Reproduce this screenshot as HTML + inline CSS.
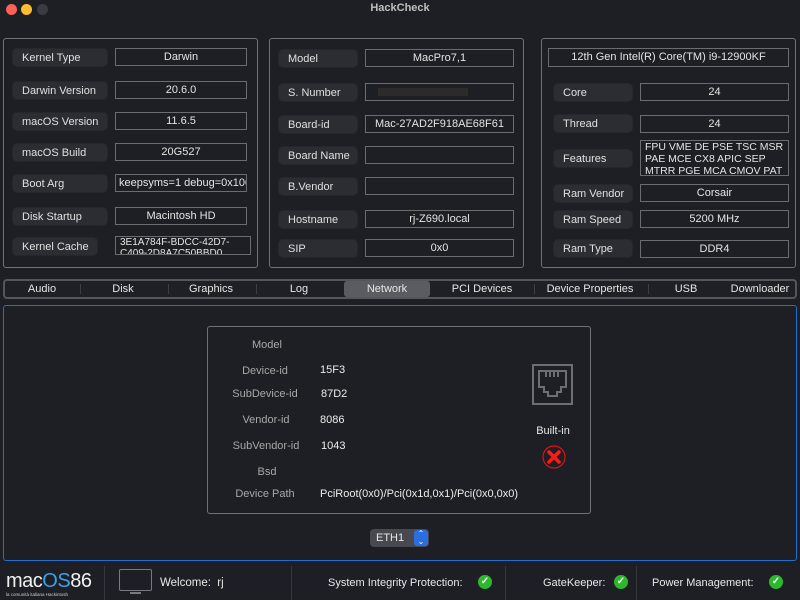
<!DOCTYPE html>
<html><head><meta charset="utf-8"><style>
*{margin:0;padding:0;box-sizing:border-box}
body{width:800px;height:600px;background:#1e1f25;font-family:"Liberation Sans",sans-serif;color:#dcdcdc;position:relative;overflow:hidden;font-size:11px}
.a{position:absolute}
.panel{position:absolute;border:1px solid #707177;border-radius:3px}
.lb{position:absolute;background:#2b2d33;border-radius:4px;padding-left:9px;height:17px;line-height:18px;font-size:11px;color:#e0e0e0;box-shadow:0 0 0 1px #26272c}
.vb{position:absolute;border:1px solid #6b6c70;text-align:center;height:18px;line-height:16px;font-size:11px;color:#e4e4e4;white-space:nowrap;overflow:hidden}
.tab{position:absolute;top:281px;height:16px;line-height:16px;text-align:center;font-size:11px;color:#e6e6e6}
.sep{position:absolute;top:284px;height:10px;width:1px;background:#3d3e44}
.nl{position:absolute;width:120px;text-align:center;color:#a8a8a8;font-size:11px}
.nv{position:absolute;color:#ececec;font-size:11px}
.chk{position:absolute;width:14px;height:14px;border-radius:50%;background:#2bb82d;color:#fff;font-size:10px;line-height:14px;text-align:center;font-weight:bold}
.fs{position:absolute;top:566px;width:1px;height:34px;background:#35363b}
</style></head><body>
<div class="a" style="left:6px;top:4px;width:11px;height:11px;border-radius:50%;background:#fe5f57"></div>
<div class="a" style="left:21px;top:4px;width:11px;height:11px;border-radius:50%;background:#febc2e"></div>
<div class="a" style="left:37px;top:4px;width:11px;height:11px;border-radius:50%;background:#3b3c42"></div>
<div class="a" style="left:0;top:2px;width:800px;text-align:center;font-weight:bold;font-size:11px;color:#bfbfbf">HackCheck</div>

<div class="panel" style="left:3px;top:38px;width:255px;height:230px"></div>
<div class="lb" style="left:13px;top:49px;width:94px">Kernel Type</div><div class="vb" style="left:115px;top:48px;width:132px">Darwin</div>
<div class="lb" style="left:13px;top:82px;width:94px">Darwin Version</div><div class="vb" style="left:115px;top:81px;width:132px">20.6.0</div>
<div class="lb" style="left:13px;top:113px;width:94px">macOS Version</div><div class="vb" style="left:115px;top:112px;width:132px">11.6.5</div>
<div class="lb" style="left:13px;top:144px;width:94px">macOS Build</div><div class="vb" style="left:115px;top:143px;width:132px">20G527</div>
<div class="lb" style="left:13px;top:175px;width:94px">Boot Arg</div><div class="vb" style="left:115px;top:174px;width:132px;text-align:left;padding-left:3px">keepsyms=1 debug=0x100</div>
<div class="lb" style="left:13px;top:208px;width:94px">Disk Startup</div><div class="vb" style="left:115px;top:207px;width:132px">Macintosh HD</div>
<div class="lb" style="left:13px;top:238px;width:84px">Kernel Cache</div><div class="vb" style="left:115px;top:236px;width:136px;height:19px;text-align:left;padding-left:4px;line-height:11px;font-size:10px;white-space:normal">3E1A784F-BDCC-42D7-C409-2D8A7C50BBD0</div>

<div class="panel" style="left:269px;top:38px;width:255px;height:230px"></div>
<div class="lb" style="left:279px;top:50px;width:78px">Model</div><div class="vb" style="left:365px;top:49px;width:149px">MacPro7,1</div>
<div class="lb" style="left:279px;top:84px;width:78px">S. Number</div><div class="vb" style="left:365px;top:83px;width:149px"><div style="margin:4px 0 0 12px;width:90px;height:8px;background:#2c2b2a"></div></div>
<div class="lb" style="left:279px;top:116px;width:78px">Board-id</div><div class="vb" style="left:365px;top:115px;width:149px">Mac-27AD2F918AE68F61</div>
<div class="lb" style="left:279px;top:147px;width:78px">Board Name</div><div class="vb" style="left:365px;top:146px;width:149px"></div>
<div class="lb" style="left:279px;top:178px;width:78px">B.Vendor</div><div class="vb" style="left:365px;top:177px;width:149px"></div>
<div class="lb" style="left:279px;top:211px;width:78px">Hostname</div><div class="vb" style="left:365px;top:210px;width:149px">rj-Z690.local</div>
<div class="lb" style="left:279px;top:240px;width:78px">SIP</div><div class="vb" style="left:365px;top:239px;width:149px">0x0</div>

<div class="panel" style="left:541px;top:38px;width:255px;height:230px"></div>
<div class="vb" style="left:548px;top:48px;width:241px;height:19px;line-height:17px">12th Gen Intel(R) Core(TM) i9-12900KF</div>
<div class="lb" style="left:554px;top:84px;width:78px">Core</div><div class="vb" style="left:640px;top:83px;width:149px">24</div>
<div class="lb" style="left:554px;top:115px;width:78px">Thread</div><div class="vb" style="left:640px;top:115px;width:149px">24</div>
<div class="lb" style="left:554px;top:150px;width:78px">Features</div><div class="vb" style="left:640px;top:140px;width:149px;height:36px;text-align:left;padding-left:4px;line-height:12px;white-space:normal;font-size:10.5px">FPU VME DE PSE TSC MSR PAE MCE CX8 APIC SEP MTRR PGE MCA CMOV PAT</div>
<div class="lb" style="left:554px;top:185px;width:78px">Ram Vendor</div><div class="vb" style="left:640px;top:184px;width:149px">Corsair</div>
<div class="lb" style="left:554px;top:211px;width:78px">Ram Speed</div><div class="vb" style="left:640px;top:210px;width:149px">5200 MHz</div>
<div class="lb" style="left:554px;top:240px;width:78px">Ram Type</div><div class="vb" style="left:640px;top:240px;width:149px">DDR4</div>

<div class="a" style="left:3px;top:279px;width:794px;height:20px;border:2px solid #55565b;border-radius:4px;background:#1f2025"></div>
<div class="a" style="left:344px;top:281px;width:86px;height:16px;background:#5b5c61;border-radius:3px"></div>
<div class="tab" style="left:6px;width:72px">Audio</div>
<div class="sep" style="left:80px"></div>
<div class="tab" style="left:80px;width:86px">Disk</div>
<div class="sep" style="left:168px"></div>
<div class="tab" style="left:168px;width:86px">Graphics</div>
<div class="sep" style="left:256px"></div>
<div class="tab" style="left:256px;width:86px">Log</div>
<div class="tab" style="left:344px;width:86px">Network</div>
<div class="tab" style="left:432px;width:100px">PCI Devices</div>
<div class="sep" style="left:534px"></div>
<div class="tab" style="left:534px;width:112px">Device Properties</div>
<div class="sep" style="left:648px"></div>
<div class="tab" style="left:648px;width:76px">USB</div>
<div class="tab" style="left:724px;width:72px">Downloader</div>

<div class="a" style="left:3px;top:305px;width:794px;height:256px;border:1px solid #1f6ed0;border-radius:3px"></div>
<div class="a" style="left:207px;top:326px;width:384px;height:188px;border:1px solid #707177;border-radius:3px"></div>
<div class="nl" style="left:207px;top:339px">Model</div>
<div class="nl" style="left:205px;top:365px">Device-id</div><div class="nv" style="left:320px;top:364px">15F3</div>
<div class="nl" style="left:205px;top:388px">SubDevice-id</div><div class="nv" style="left:321px;top:388px">87D2</div>
<div class="nl" style="left:206px;top:414px">Vendor-id</div><div class="nv" style="left:320px;top:414px">8086</div>
<div class="nl" style="left:206px;top:440px">SubVendor-id</div><div class="nv" style="left:321px;top:440px">1043</div>
<div class="nl" style="left:207px;top:466px">Bsd</div>
<div class="nl" style="left:205px;top:488px">Device Path</div><div class="nv" style="left:320px;top:488px">PciRoot(0x0)/Pci(0x1d,0x1)/Pci(0x0,0x0)</div>
<svg class="a" style="left:532px;top:364px" width="41" height="41" viewBox="0 0 41 41"><rect x="1" y="1" width="39" height="39" fill="none" stroke="#6e6e72" stroke-width="2"/><path d="M7 7h27v16h-5v5h-4v4h-9v-4h-4v-5h-5z" fill="none" stroke="#6e6e72" stroke-width="2"/><path d="M14 7v6M18 7v6M22 7v6M26 7v6" stroke="#6e6e72" stroke-width="2"/></svg>
<div class="a" style="left:530px;top:425px;width:46px;text-align:center;font-size:11px;color:#e8e8e8">Built-in</div>
<svg class="a" style="left:542px;top:445px" width="24" height="24" viewBox="0 0 24 24"><circle cx="12" cy="12" r="11" fill="none" stroke="#e01010" stroke-width="1.2"/><path d="M7 7l10 10M17 7L7 17" stroke="#ff1a1a" stroke-width="3.5" stroke-linecap="round"/></svg>
<div class="a" style="left:370px;top:529px;width:59px;height:18px;background:#48494e;border-radius:4px;font-size:11px;line-height:18px;padding-left:6px;color:#e8e8e8">ETH1</div>
<div class="a" style="left:414px;top:530px;width:14px;height:16px;background:#2a6ee0;border-radius:3px;color:#fff;font-size:8px;line-height:8px;text-align:center">⌃<br>⌄</div>

<div class="a" style="left:6px;top:570px;font-size:20px;color:#f0f0f0;letter-spacing:-0.5px">mac<span style="color:#3aa0e8">OS</span>86</div>
<div class="a" style="left:6px;top:592px;font-size:4.5px;color:#ccc">la comunità italiana Hackintosh</div>
<div class="fs" style="left:104px"></div>
<div class="a" style="left:119px;top:569px;width:33px;height:22px;border:1.5px solid #7a7a7e;border-radius:2px"></div>
<div class="a" style="left:130px;top:592px;width:11px;height:2px;background:#7a7a7e"></div>
<div class="a" style="left:160px;top:577px;font-size:11.5px;color:#e8e8e8">Welcome:&nbsp; rj</div>
<div class="fs" style="left:291px"></div>
<div class="a" style="left:328px;top:577px;font-size:11px;color:#e8e8e8">System Integrity Protection:</div>
<div class="chk" style="left:478px;top:575px">✓</div>
<div class="fs" style="left:505px"></div>
<div class="a" style="left:543px;top:577px;font-size:11px;color:#e8e8e8">GateKeeper:</div>
<div class="chk" style="left:614px;top:575px">✓</div>
<div class="fs" style="left:636px"></div>
<div class="a" style="left:652px;top:577px;font-size:11px;color:#e8e8e8">Power Management:</div>
<div class="chk" style="left:769px;top:575px">✓</div>
</body></html>
